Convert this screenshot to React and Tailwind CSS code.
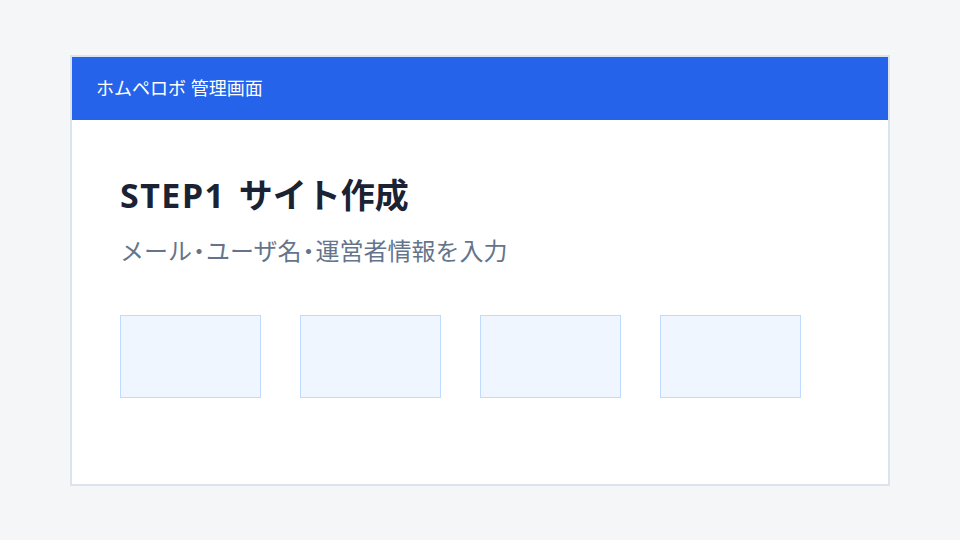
import React from "react";

const steps = [1, 2, 3, 4];

const App = () => {
  return (
    <div className="min-h-screen w-full bg-[#f5f6f8] flex items-center justify-center font-['Noto_Sans','Noto_Sans_CJK_JP',sans-serif]">
      <div className="w-[820px] h-[431px] bg-white border-2 border-[#dbe3ee] flex flex-col">
        {/* Header */}
        <div className="h-[63px] bg-[#2563eb] flex items-center px-6">
          <span className="text-white text-[18px] leading-none">ホムペロボ 管理画面</span>
        </div>

        {/* Body */}
        <div className="px-12 pt-[55px]">
          <h1 className="text-[34px] leading-[40px] font-bold text-[#1a2233]">
            <span className="tracking-[1.5px] mr-[3px]">STEP1 </span>サイト作成
          </h1>
          <p className="mt-5 text-[24px] leading-[32px] text-[#64748b]">
            メール<span className="[font-feature-settings:'palt'] px-[1px]">・</span>ユーザ名<span className="[font-feature-settings:'palt'] px-[1px]">・</span>運営者情報を入力
          </p>

          <div className="mt-12 flex gap-[39px]">
            {steps.map((s) => (
              <div
                key={s}
                className="w-[141px] h-[83px] bg-[#eff6ff] border border-[#bfdbfe]"
              ></div>
            ))}
          </div>
        </div>
      </div>
    </div>
  );
};

export default App;
